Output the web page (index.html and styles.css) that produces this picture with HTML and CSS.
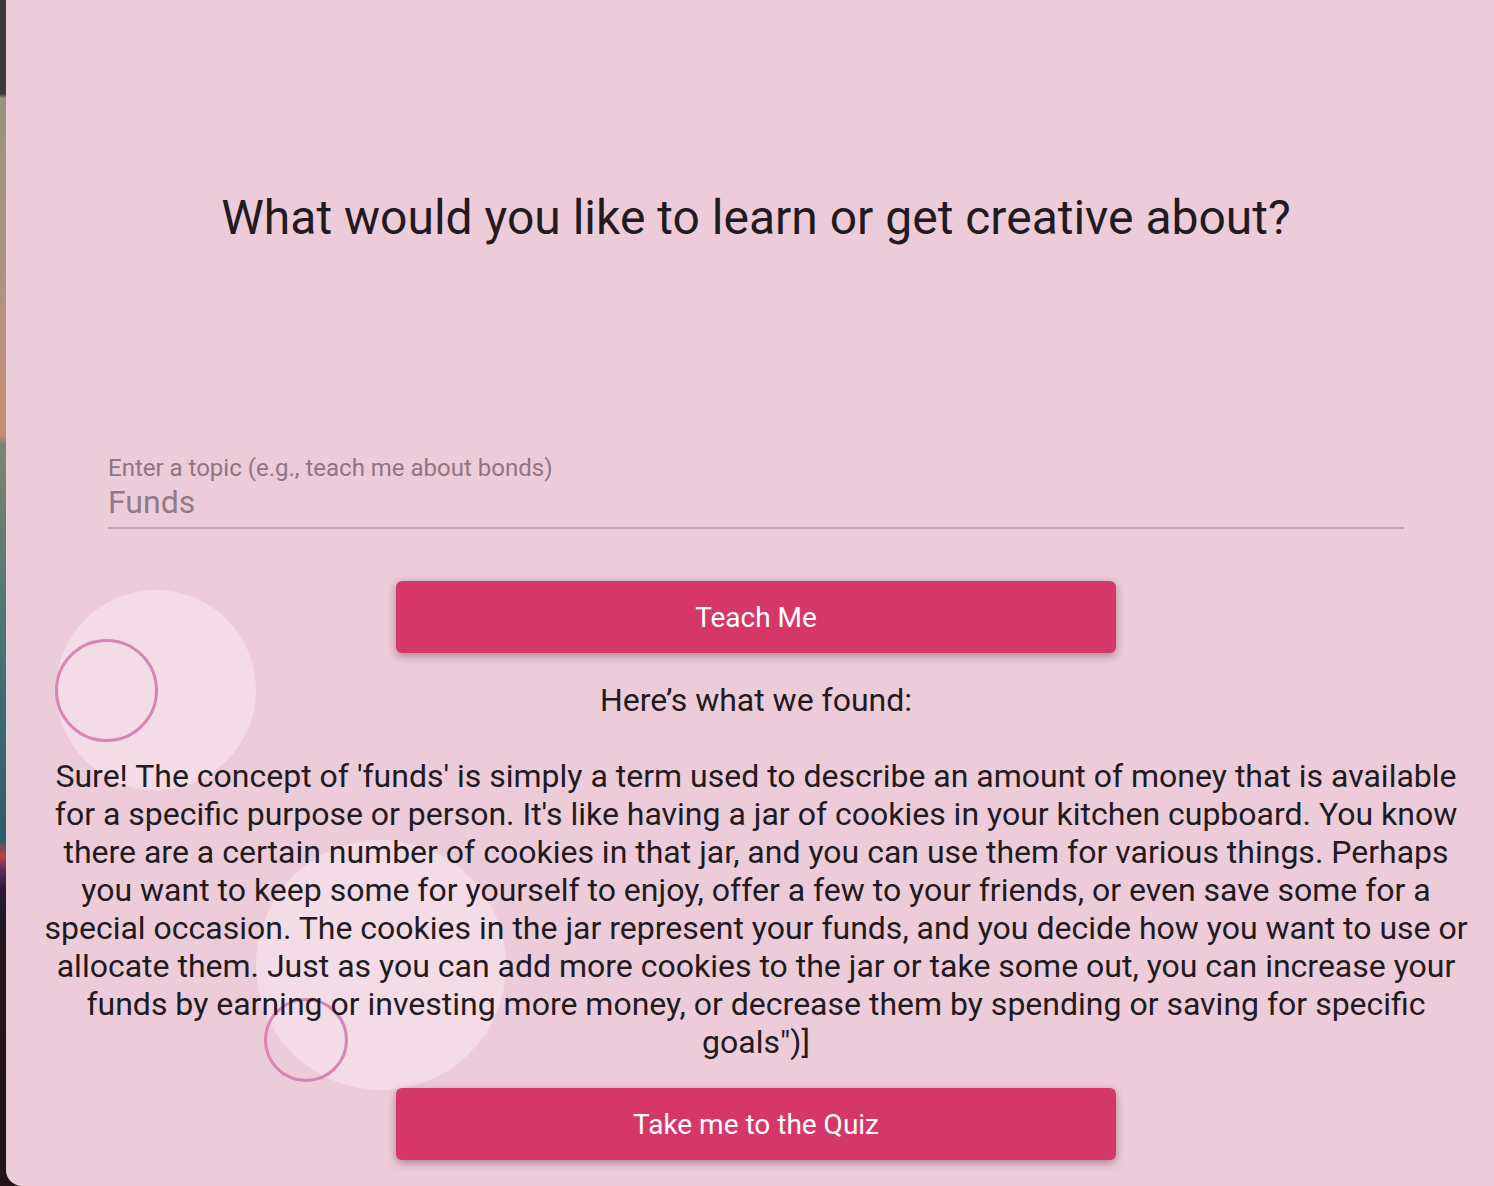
FILE: index.html
```html
<!DOCTYPE html>
<html lang="en">
<head>
<meta charset="utf-8">
<title>Learn</title>
<link rel="stylesheet" href="styles.css">
</head>
<body>
<div class="edge"></div>
<main class="card">
  <div class="decor">
    <span class="blob blob-one"></span>
    <span class="ring ring-one"></span>
    <span class="blob blob-two"></span>
    <span class="ring ring-two"></span>
  </div>
  <div class="content">
    <h1 class="title">What would you like to learn or get creative about?</h1>
    <div class="field">
      <label class="field-label">Enter a topic (e.g., teach me about bonds)</label>
      <div class="field-value">Funds</div>
    </div>
    <button class="btn btn-teach">Teach Me</button>
    <h2 class="found">Here’s what we found:</h2>
    <p class="answer">Sure! The concept of 'funds' is simply a term used to describe an amount of money that is available for a specific purpose or person. It's like having a jar of cookies in your kitchen cupboard. You know there are a certain number of cookies in that jar, and you can use them for various things. Perhaps you want to keep some for yourself to enjoy, offer a few to your friends, or even save some for a special occasion. The cookies in the jar represent your funds, and you decide how you want to use or allocate them. Just as you can add more cookies to the jar or take some out, you can increase your funds by earning or investing more money, or decrease them by spending or saving for specific goals")]</p>
    <button class="btn btn-quiz">Take me to the Quiz</button>
  </div>
</main>
</body>
</html>
```

FILE: styles.css
```css
html, body {
  margin: 0;
  padding: 0;
  height: 100%;
}
body {
  display: flex;
  width: 1494px;
  height: 1186px;
  overflow: hidden;
  background: #221418;
  font-family: Roboto, "Noto Sans", sans-serif;
}
.edge {
  width: 6px;
  flex: 0 0 6px;
  height: 1186px;
  background: linear-gradient(180deg,
    #3d3b39 0px, #3d3b39 94px,
    #9a9182 98px, #a89580 250px, #c58d70 420px, #c48a6f 436px,
    #7f8472 444px, #5c7c73 560px, #39706f 700px, #2a5f66 840px,
    #c23f4a 856px, #5b2b5e 870px, #2c1733 890px, #1e1a2c 905px,
    #251419 940px, #231418 1186px);
}
.card {
  position: relative;
  flex: 1;
  height: 1186px;
  box-sizing: border-box;
  padding-left: 12px;
  background: #ecccd9;
  border-bottom-left-radius: 16px;
  overflow: hidden;
}
.decor {
  position: absolute;
  inset: 0;
  pointer-events: none;
}
.blob {
  position: absolute;
  border-radius: 50%;
  background: #f3dce6;
}
.blob-one {
  left: 50px;
  top: 590px;
  width: 200px;
  height: 200px;
}
.blob-two {
  left: 250px;
  top: 840px;
  width: 250px;
  height: 250px;
}
.ring {
  position: absolute;
  border-radius: 50%;
  box-sizing: border-box;
  border: 3px solid #d884b4;
}
.ring-one {
  left: 49px;
  top: 639px;
  width: 103px;
  height: 103px;
}
.ring-two {
  left: 258px;
  top: 998px;
  width: 84px;
  height: 84px;
}
.content {
  position: relative;
  z-index: 1;
  display: flex;
  flex-direction: column;
  align-items: center;
  color: #221a1f;
}
.title {
  margin: 190px 0 0;
  font-size: 48px;
  line-height: 56px;
  font-weight: 400;
  text-align: center;
}
.field {
  width: 1296px;
  margin-top: 208px;
  display: flex;
  flex-direction: column;
  gap: 1px;
  padding-bottom: 6px;
  border-bottom: 2px solid #c4a2b3;
}
.field-label {
  font-size: 24px;
  line-height: 28px;
  color: #8f7583;
}
.field-value {
  font-size: 32px;
  line-height: 38px;
  color: #927a88;
}
.btn {
  width: 720px;
  height: 72px;
  border: none;
  border-radius: 6px;
  background: #d53868;
  color: #ffffff;
  font-family: Roboto, "Noto Sans", sans-serif;
  font-size: 28px;
  font-weight: 400;
  box-shadow: 0 3px 8px rgba(90, 40, 60, 0.45);
  cursor: pointer;
}
.btn-teach {
  margin-top: 52px;
}
.found {
  margin: 28px 0 0;
  font-size: 32px;
  line-height: 38px;
  font-weight: 400;
  text-align: center;
}
.answer {
  margin: 38px 0 0;
  width: 1436px;
  font-size: 32px;
  line-height: 38px;
  text-align: center;
}
.btn-quiz {
  margin-top: 27px;
}
```
